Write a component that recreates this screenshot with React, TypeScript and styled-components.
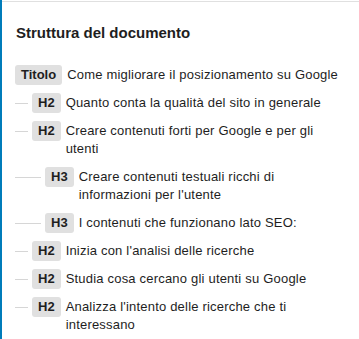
import React from "react";
import styled, { createGlobalStyle } from "styled-components";

const Global = createGlobalStyle`
  html, body { margin: 0; padding: 0; background: #fff; }
  body { font-family: "Liberation Sans", Arial, sans-serif; color: #1e1e1e; }
`;

const Panel = styled.div`
  min-height: 339px;
  box-sizing: border-box;
  border-left: 2px solid #007cba;
  padding: 1px 0 0 0;
`;

const Inner = styled.div`
  border-top: 1px solid #e0e0e0;
  padding: 19px 16px 8px 13px;
`;

const Title = styled.h2`
  margin: 0 0 0 1px;
  font-size: 15px;
  font-weight: 700;
  line-height: 24px;
  color: #1e1e1e;
`;

const List = styled.ul`
  list-style: none;
  margin: 16px 0 0 0;
  padding: 0;
`;

const Row = styled.li`
  display: flex;
  align-items: flex-start;
  padding: 5px 0;
  font-size: 13px;
  line-height: 18px;
  letter-spacing: 0.2px;
`;

const Dash = styled.span<{ $w: number }>`
  flex: none;
  width: ${(p) => p.$w}px;
  height: 1px;
  margin: 9px 4px 0 0;
  background: #d6d6d6;
`;

const Badge = styled.span`
  flex: none;
  background: #e0e0e0;
  border-radius: 3px;
  padding: 1px 6px;
  margin: -1px 5px -1px 0;
  font-weight: 600;
  letter-spacing: 0;
  color: #1e1e1e;
`;

const Text = styled.span`
  flex: 1;
  min-width: 0;
`;

const items: { level: string; indent: number; text: string }[] = [
  { level: "Titolo", indent: 0, text: "Come migliorare il posizionamento su Google" },
  { level: "H2", indent: 13, text: "Quanto conta la qualità del sito in generale" },
  { level: "H2", indent: 13, text: "Creare contenuti forti per Google e per gli utenti" },
  { level: "H3", indent: 26, text: "Creare contenuti testuali ricchi di informazioni per l'utente" },
  { level: "H3", indent: 26, text: "I contenuti che funzionano lato SEO:" },
  { level: "H2", indent: 13, text: "Inizia con l'analisi delle ricerche" },
  { level: "H2", indent: 13, text: "Studia cosa cercano gli utenti su Google" },
  { level: "H2", indent: 13, text: "Analizza l'intento delle ricerche che ti interessano" },
];

export default function App() {
  return (
    <>
      <Global />
      <Panel>
        <Inner>
          <Title>Struttura del documento</Title>
          <List>
            {items.map((it, i) => (
              <Row key={i}>
                {it.indent > 0 && <Dash $w={it.indent} />}
                <Badge>{it.level}</Badge>
                <Text>{it.text}</Text>
              </Row>
            ))}
          </List>
        </Inner>
      </Panel>
    </>
  );
}
